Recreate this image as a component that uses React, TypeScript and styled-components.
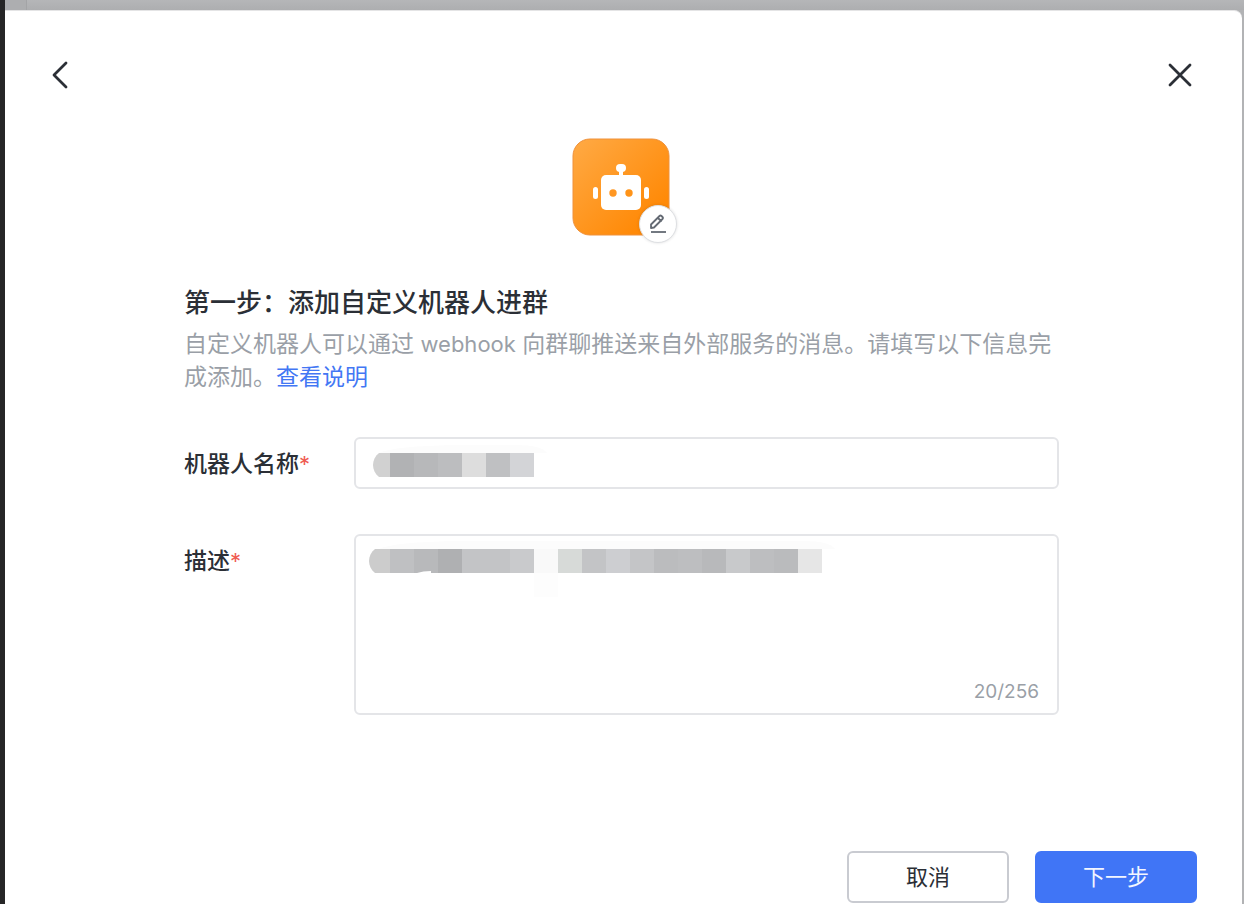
import React from 'react';
import styled, { createGlobalStyle } from 'styled-components';

const GlobalStyle = createGlobalStyle`
  * { box-sizing: border-box; }
  body {
    margin: 0;
    background: #b2b3b5;
    color: #2b2f36;
    font-family: Inter, "Noto Sans CJK SC", sans-serif;
    font-size: 23px;
    line-height: 33px;
  }
  button, input, textarea { font: inherit; color: inherit; }
`;

const Window = styled.div`
  display: flex;
  flex-direction: column;
  min-height: 100vh;
  border-left: 5px solid #262627;
`;

const TopStrip = styled.div`
  flex: none;
  height: 10px;
  background: linear-gradient(#b5b6b8, #adaeb0);
`;

const SidebarEdge = styled.div`
  width: 22px;
  height: 100%;
  background: #adaeb0;
  border-right: 1px solid #a3a4a6;
`;

const Dialog = styled.main`
  flex: 1;
  display: flex;
  flex-direction: column;
  margin-right: 2px;
  padding-bottom: 1px;
  background: #fff;
  border-top: 1px solid #e4e4e5;
  border-radius: 0 8px 0 0;
`;

const Header = styled.header`
  display: flex;
  justify-content: space-between;
  padding: 44px 42px 0 35px;
`;

const IconButton = styled.button`
  display: grid;
  place-items: center;
  width: 40px;
  height: 40px;
  padding: 0;
  border: 0;
  background: none;
  cursor: pointer;
`;

const Content = styled.form`
  display: flex;
  flex-direction: column;
  padding: 43px 183px 0 179px;
`;

const Avatar = styled.div`
  position: relative;
  align-self: center;
  width: 99px;
  height: 98px;
  margin-bottom: 50px;
`;

const EditButton = styled.button`
  position: absolute;
  right: -6px;
  bottom: -7px;
  display: grid;
  place-items: center;
  width: 38px;
  height: 38px;
  padding: 0;
  border: 1px solid #dee0e3;
  border-radius: 50%;
  background: #fff;
  box-shadow: 0 0 3px #1f232926;
  cursor: pointer;
`;

const Title = styled.h1`
  margin: 0 0 8px;
  font-size: 26px;
  line-height: 34px;
  font-weight: 500;
`;

const Intro = styled.p`
  margin: 0 0 43px;
  color: #9a9fa7;
`;

const Latin = styled.span`
  font-size: 22px;
`;

const HelpLink = styled.a`
  color: #4377f4;
  text-decoration: none;
`;

const Field = styled.div`
  display: grid;
  grid-template-columns: 170px 1fr;
  margin-bottom: 45px;
`;

const Label = styled.label`
  padding-top: 11px;
  font-weight: 500;
`;

const Required = styled.span`
  color: #ef5b52;
  font-size: 22px;
  font-weight: 400;
`;

const Control = styled.div`
  position: relative;
  display: flex;
`;

const TextInput = styled.input`
  width: 100%;
  height: 52px;
  padding: 0 18px;
  border: 2px solid #e4e5e8;
  border-radius: 6px;
  background: #fff;
  outline: 0;
`;

const TextArea = styled.textarea`
  width: 100%;
  height: 181px;
  padding: 10px 18px;
  border: 2px solid #e4e5e8;
  border-radius: 6px;
  background: #fff;
  outline: 0;
  resize: none;
`;

const Masked = styled.svg`
  position: absolute;
  top: 6px;
  left: 15px;
  pointer-events: none;
`;

const Counter = styled.span`
  position: absolute;
  right: 20px;
  bottom: 9px;
  color: #9a9fa7;
  font-size: 19px;
  line-height: 28px;
`;

const Footer = styled.footer`
  display: flex;
  justify-content: flex-end;
  gap: 26px;
  margin-top: auto;
  padding: 0 45px 0 34px;
`;

const ActionButton = styled.button<{ $primary?: boolean }>`
  width: 162px;
  height: 52px;
  padding: 0;
  border: 2px solid ${({ $primary }) => ($primary ? '#4075f6' : '#c9cbd1')};
  border-radius: 6px;
  background: ${({ $primary }) => ($primary ? '#4075f6' : '#fff')};
  color: ${({ $primary }) => ($primary ? '#f3f6ff' : '#2b2f36')};
  font-size: 22px;
  cursor: pointer;
`;

const nameBlocks = ['#d1d1d1', '#b1b2b4', '#b7b8ba', '#bcbdbf', '#dddddd', '#bfc0c2', '#d3d4d7'];
const descriptionBlocks = [
  '#cccccc', '#bfc0c2', '#b8b9bb', '#afb0b2', '#c3c4c6', '#c3c4c6', '#c9cacc',
  '#f9f9f9', '#d7dad8', '#c3c4c6', '#cdced1', '#c4c5c7', '#bbbcbe', '#bdbec0',
  '#b8b9bb', '#c8c9cb', '#bdbec0', '#babbbd', '#e6e6e6',
];

interface MosaicProps {
  id: string;
  colors: string[];
  start: number;
  top: number;
  children?: React.ReactNode;
}

/* Pixelated cover over a private value, with a rounded leading edge. */
function Mosaic({ id, colors, start, top, children }: MosaicProps) {
  const end = 21 + (colors.length - 1) * 24;
  return (
    <Masked width={end + 20} height={60} aria-hidden="true">
      <clipPath id={id}>
        <path d={`M${start + 6} ${top}C${start - 2} ${top + 6} ${start - 2} ${top + 18} ${start + 6} ${top + 24}H${end}V${top}Z`} />
      </clipPath>
      <path d={`M10 ${top}Q24 ${top - 7} 90 ${top - 8}H${end - 18}Q${end + 8} ${top - 8} ${end + 13} ${top}Z`} fill="#fcfcfc" />
      <g clipPath={`url(#${id})`}>
        {colors.map((color, i) => (
          <rect key={i} x={i * 24 - 3} y={top} width={24} height={24} fill={color} />
        ))}
      </g>
      {children}
    </Masked>
  );
}

function RobotLogo() {
  return (
    <svg width="98" height="98" viewBox="0 0 98 98" role="img" aria-label="机器人">
      <defs>
        <linearGradient id="robot-fill" x1="0" y1="0" x2="1" y2="1">
          <stop offset="0" stopColor="#ffaa45" />
          <stop offset="0.8" stopColor="#ff8a08" />
          <stop offset="1" stopColor="#ff8500" />
        </linearGradient>
      </defs>
      <rect x="1" y="1" width="96" height="96" rx="17" fill="url(#robot-fill)" stroke="#ef913a" strokeWidth="1" />
      <g fill="#fff">
        <rect x="29" y="37" width="40" height="35" rx="5" />
        <rect x="44" y="26" width="10" height="8" rx="4" />
        <rect x="47" y="29" width="4" height="10" />
        <rect x="21" y="49" width="5" height="12" rx="2.5" />
        <rect x="72" y="49" width="5" height="12" rx="2.5" />
      </g>
      <circle cx="41" cy="55" r="3.7" fill="#ff9722" />
      <circle cx="57" cy="55" r="3.7" fill="#ff9318" />
    </svg>
  );
}

export default function App() {
  return (
    <Window lang="zh-CN">
      <GlobalStyle />
      <TopStrip><SidebarEdge /></TopStrip>
      <Dialog>
        <Header>
          <IconButton type="button" aria-label="返回">
            <svg width="28" height="28" fill="none" stroke="#2b2f36" strokeWidth="2.8" strokeLinecap="round" strokeLinejoin="round">
              <path d="M20 2 8 14l12 12" />
            </svg>
          </IconButton>
          <IconButton type="button" aria-label="关闭">
            <svg width="28" height="28" fill="none" stroke="#2b2f36" strokeWidth="2.8" strokeLinecap="round">
              <path d="m4 4 20 20M24 4 4 24" />
            </svg>
          </IconButton>
        </Header>
        <Content id="robot-form">
          <Avatar>
            <RobotLogo />
            <EditButton type="button" aria-label="编辑头像">
              <svg width="20" height="20" fill="none" stroke="#646a73" strokeWidth="1.8" strokeLinejoin="round" strokeLinecap="round">
                <path d="M3 14v-3.500l8.500-8.500q1-1 2 0l1 1q1 1 0 2L6 13.500l-3 .5ZM10 4l3 3" />
                <path d="M3 18h15" strokeLinecap="butt" />
              </svg>
            </EditButton>
          </Avatar>
          <Title>第一步：添加自定义机器人进群</Title>
          <Intro>
            自定义机器人可以通过 <Latin>webhook</Latin> 向群聊推送来自外部服务的消息。请填写以下信息完成添加。<HelpLink href="#help">查看说明</HelpLink>
          </Intro>
          <Field>
            <Label htmlFor="robot-name">机器人名称<Required>*</Required></Label>
            <Control>
              <TextInput id="robot-name" required />
              <Mosaic id="name-mask" colors={nameBlocks} start={4} top={10} />
            </Control>
          </Field>
          <Field>
            <Label htmlFor="robot-description">描述<Required>*</Required></Label>
            <Control>
              <TextArea id="robot-description" maxLength={256} required />
              <Mosaic id="description-mask" colors={descriptionBlocks} start={0} top={9}>
                <path d="M48 33q6-2 14-2v2Z" fill="#fff" />
                <rect x={165} y={33} width={24} height={24} fill="#fdfdfd" />
              </Mosaic>
              <Counter>20/256</Counter>
            </Control>
          </Field>
        </Content>
        <Footer>
          <ActionButton type="button">取消</ActionButton>
          <ActionButton type="submit" form="robot-form" $primary>下一步</ActionButton>
        </Footer>
      </Dialog>
    </Window>
  );
}
